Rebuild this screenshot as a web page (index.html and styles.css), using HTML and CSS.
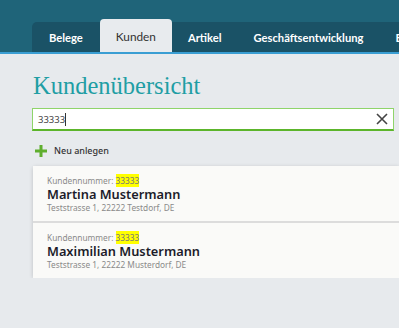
FILE: index.html
```html
<!DOCTYPE html>
<html lang="de">

<head>
    <meta charset="UTF-8">
    <meta name="viewport" content="width=device-width, initial-scale=1.0">
    <title>Kundenübersicht</title>
    <link rel="stylesheet" href="styles.css">
</head>

<body>
    <header class="topbar">
        <nav class="tabs">
            <a class="tab tab-first">Belege</a>
            <a class="tab active">Kunden</a>
            <a class="tab">Artikel</a>
            <a class="tab">Geschäftsentwicklung</a>
            <a class="tab">Einstellungen</a>
        </nav>
    </header>

    <main class="content">
        <h1 class="page-title">Kundenübersicht</h1>

        <div class="search">
            <span class="search-value">33333</span><span class="caret"></span>
            <button class="search-clear" title="Leeren">
                <svg width="12" height="12" viewBox="0 0 12 12">
                    <path d="M1 1 L11 11 M11 1 L1 11" stroke="#444" stroke-width="1.6" fill="none" />
                </svg>
            </button>
        </div>

        <a class="new-link">
            <svg width="12" height="12" viewBox="0 0 12 12">
                <path d="M4.5 0 H7.5 V4.5 H12 V7.5 H7.5 V12 H4.5 V7.5 H0 V4.5 H4.5 Z" fill="#5fae2e" />
            </svg>
            Neu anlegen
        </a>

        <ul class="results">
            <li class="customer">
                <div class="customer-no">Kundennummer: <mark>33333</mark></div>
                <div class="customer-name">Martina Mustermann</div>
                <div class="customer-address">Teststrasse 1, 22222 Testdorf, DE</div>
            </li>
            <li class="customer">
                <div class="customer-no">Kundennummer: <mark>33333</mark></div>
                <div class="customer-name">Maximilian Mustermann</div>
                <div class="customer-address">Teststrasse 1, 22222 Musterdorf, DE</div>
            </li>
        </ul>
    </main>
</body>

</html>
```

FILE: styles.css
```css
body {
    margin: 0;
    overflow: hidden;
    background-color: #e7eaed;
    font-family: 'Lato', 'Noto Sans', sans-serif;
    color: #222;
}

/* Header with tabs */
.topbar {
    background-color: #1f6479;
    padding-top: 22px;
    border-bottom: 2px solid #3a9ed3;
}

.tabs {
    display: flex;
    align-items: flex-end;
    height: 30px;
    margin-left: 32px;
    background-color: #1a5266;
    border-top-left-radius: 5px;
    white-space: nowrap;
}

.tab {
    display: flex;
    align-items: center;
    height: 30px;
    padding: 0 16px;
    color: #fff;
    font-size: 11.2px;
    font-weight: bold;
    cursor: pointer;
}

.tab-first {
    padding-left: 17px;
    padding-right: 17px;
}

.tab.active {
    height: 33px;
    padding-top: 1px;
    box-sizing: border-box;
    background-color: #e8ebee;
    color: #333;
    font-size: 11.8px;
    font-weight: normal;
    border-radius: 4px 4px 0 0;
}

/* Page content */
.content {
    padding-left: 32px;
}

.page-title {
    margin: 17px 0 0 1px;
    font-family: 'Liberation Serif', serif;
    font-weight: normal;
    font-size: 24.5px;
    line-height: 30px;
    color: #1f9ea4;
}

.search {
    display: flex;
    align-items: center;
    height: 20px;
    margin: 7px 5px 0 0;
    padding: 0 5px;
    background-color: #fff;
    border: 1px solid #8fd46a;
    border-bottom: 2px solid #5cb52b;
    font-family: 'Noto Sans', sans-serif;
    font-size: 9.5px;
    color: #444;
}

.caret {
    width: 1px;
    height: 13px;
    background-color: #333;
}

.search-clear {
    margin-left: auto;
    padding: 0;
    border: none;
    background: none;
    display: flex;
}

.new-link {
    display: flex;
    align-items: center;
    gap: 7px;
    margin: 13px 0 0 3px;
    font-family: 'Noto Sans', sans-serif;
    font-size: 9px;
    font-weight: 500;
    color: #333;
}

.results {
    list-style: none;
    margin: 9px 0 0 1px;
    padding: 0;
    box-shadow: 0 1px 4px rgba(0, 0, 0, 0.18);
    border-radius: 3px 0 0 3px;
}

.customer {
    padding: 9px 14px 7px;
    background-color: #fafaf8;
    font-family: 'Noto Sans', sans-serif;
}

.customer + .customer {
    border-top: 2px solid #dcdcdc;
}

.customer-no,
.customer-address {
    font-size: 8.3px;
    color: #8a8a8a;
    line-height: 12px;
}

.customer-no mark {
    padding: 1px 0;
    background-color: #ffff00;
    color: #777;
}

.customer-name {
    font-size: 12.8px;
    font-weight: 600;
    color: #1c1c2a;
    line-height: 15px;
}
```
